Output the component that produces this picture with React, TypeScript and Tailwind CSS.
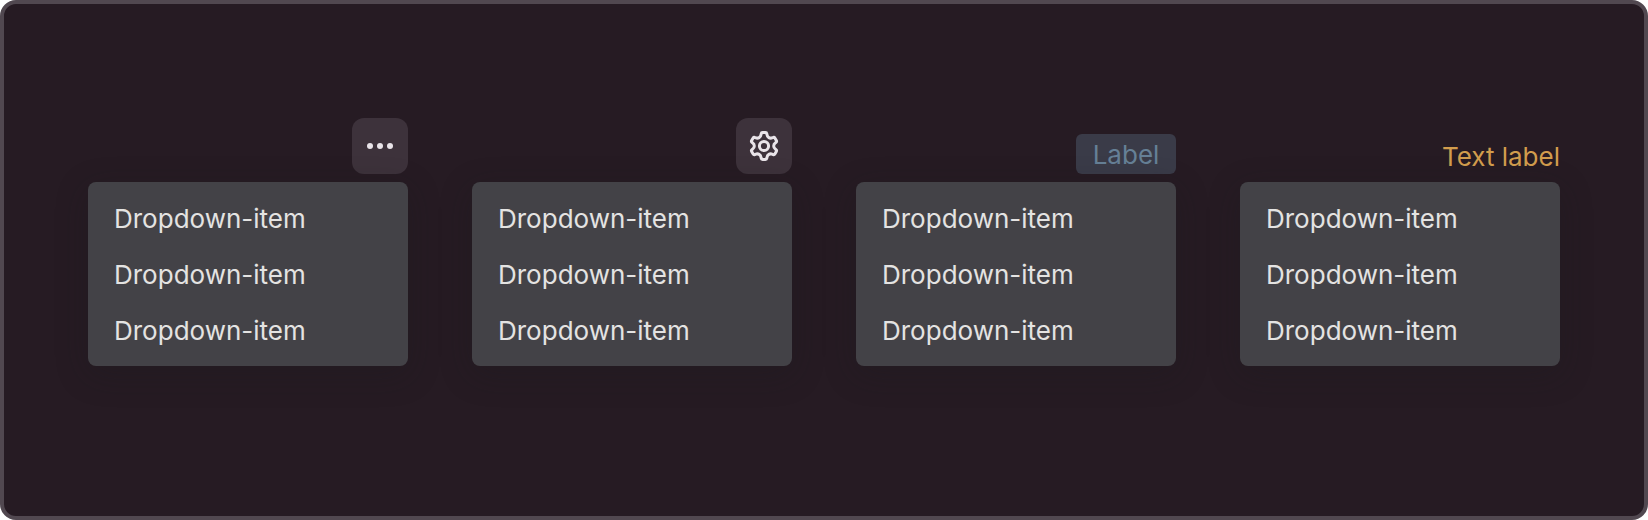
import type { ReactNode } from 'react';

const items = ['Dropdown-item', 'Dropdown-item', 'Dropdown-item'];

// Three horizontal dots
const DotsIcon = () => (
  <svg width="32" height="32" viewBox="0 0 32 32" fill="currentColor" aria-hidden="true">
    <circle cx="6" cy="16" r="3" />
    <circle cx="16" cy="16" r="3" />
    <circle cx="26" cy="16" r="3" />
  </svg>
);

// Six-toothed gear, drawn around the origin
const GearIcon = () => (
  <svg
    width="32"
    height="32"
    viewBox="-16 -16 32 32"
    fill="none"
    stroke="currentColor"
    strokeWidth="3"
    strokeLinejoin="round"
    aria-hidden="true"
  >
    <circle r="4.6" />
    <path d="M-3 -11.3L-2.8 -12.3Q-2.6 -13.4 -1.5 -13.4H1.5Q2.6 -13.4 2.8 -12.3L3 -11.3C3.2 -8.74 5.97 -7.14 8.29 -8.25L9.25 -8.57Q10.3 -8.95 10.85 -8L12.35 -5.4Q12.9 -4.45 12.05 -3.73L11.29 -3.05C9.17 -1.6 9.17 1.6 11.29 3.05L12.05 3.73Q12.9 4.45 12.35 5.4L10.85 8Q10.3 8.95 9.25 8.57L8.29 8.25C5.97 7.14 3.2 8.74 3 11.3L2.8 12.3Q2.6 13.4 1.5 13.4H-1.5Q-2.6 13.4 -2.8 12.3L-3 11.3C-3.2 8.74 -5.97 7.14 -8.29 8.25L-9.25 8.57Q-10.3 8.95 -10.85 8L-12.35 5.4Q-12.9 4.45 -12.05 3.73L-11.29 3.05C-9.17 1.6 -9.17 -1.6 -11.29 -3.05L-12.05 -3.73Q-12.9 -4.45 -12.35 -5.4L-10.85 -8Q-10.3 -8.95 -9.25 -8.57L-8.29 -8.25C-5.97 -7.14 -3.2 -8.74 -3 -11.3Z" />
  </svg>
);

const IconButton = ({ label, children }: { label: string; children: ReactNode }) => (
  <button
    type="button"
    aria-label={label}
    className="flex size-14 items-center justify-center rounded-xl bg-[#3d323b] text-[#e9e4e9]"
  >
    {children}
  </button>
);

// Trigger with its menu, aligned to the right edge
const Dropdown = ({ trigger }: { trigger: ReactNode }) => (
  <div className="flex min-w-0 flex-1 flex-col gap-2">
    <div className="flex h-14 items-end justify-end">{trigger}</div>
    <ul className="rounded-lg bg-[#434247] py-2 shadow-[0_8px_32px_rgba(26,26,31,0.3)]">
      {items.map((item, index) => (
        <li key={index}>
          <button type="button" className="h-14 w-full px-[26px] pt-0.5 text-left text-[#e4e3e2]">
            {item}
          </button>
        </li>
      ))}
    </ul>
  </div>
);

function App() {
  return (
    <div className="bg-white font-['Inter',sans-serif] text-[26px] leading-8">
      <main className="flex min-h-screen items-start gap-16 rounded-2xl border-4 border-[#514850] bg-[#261b23] px-[84px] pt-[114px] pb-24">
        <Dropdown
          trigger={
            <IconButton label="More">
              <DotsIcon />
            </IconButton>
          }
        />
        <Dropdown
          trigger={
            <IconButton label="Settings">
              <GearIcon />
            </IconButton>
          }
        />
        <Dropdown
          trigger={
            <button type="button" className="h-10 min-w-[100px] rounded-md bg-[#3a3b48] px-4 pt-0.5 text-[#668096]">
              Label
            </button>
          }
        />
        <Dropdown
          trigger={
            <button type="button" className="h-9 pt-0.5 text-[#d29d4d]">
              Text label
            </button>
          }
        />
      </main>
    </div>
  );
}

export default App;
